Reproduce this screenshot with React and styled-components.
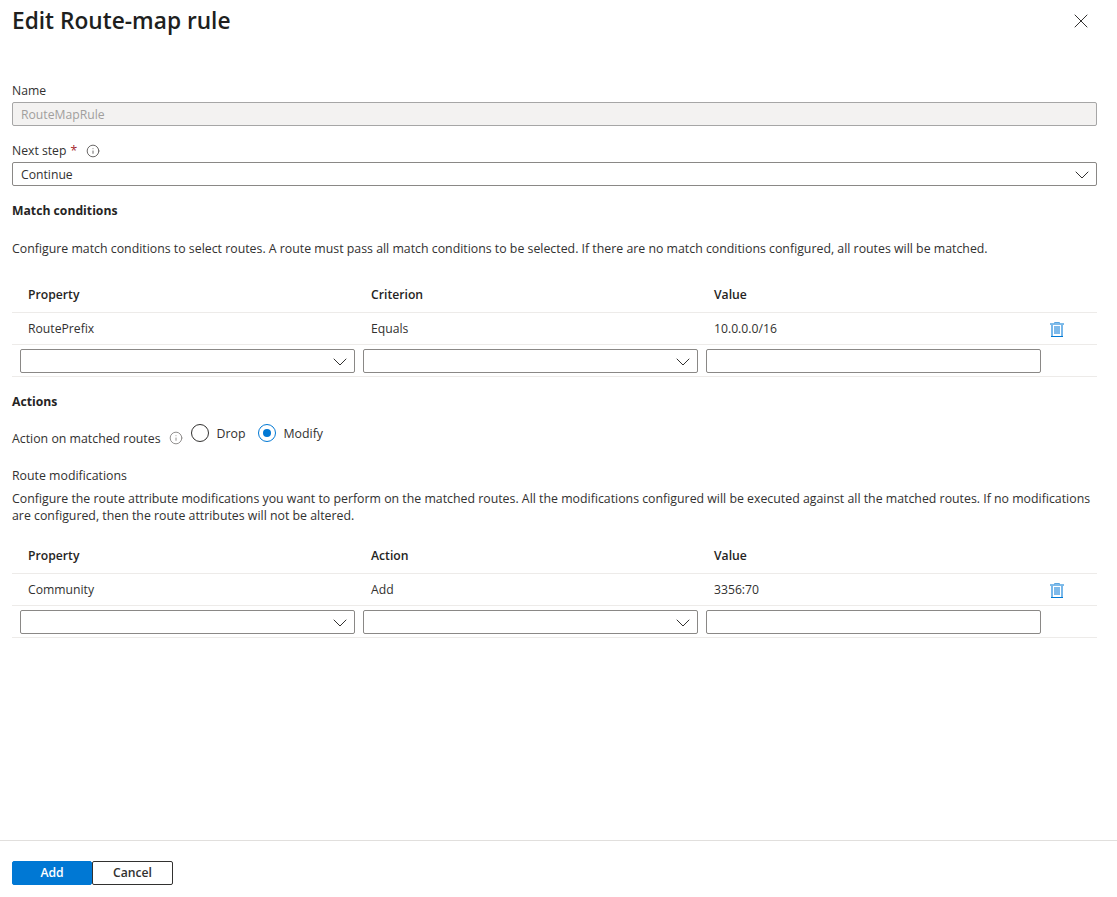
import React from "react";
import styled, { createGlobalStyle } from "styled-components";
import { X, ChevronDown, Info } from "lucide-react";

const FONT = `"Open Sans", "Noto Sans", "Liberation Sans", sans-serif`;

const Global = createGlobalStyle`
  html, body { margin: 0; padding: 0; background: #fff; }
  body { font-family: ${FONT}; font-size: 12.2px; color: #323130; }
  * { box-sizing: border-box; }
`;

const Blade = styled.div`
  height: 897px;
  display: flex;
  flex-direction: column;
  overflow: hidden;
`;
const Header = styled.header`
  height: 42px;
  padding: 0 24px 0 12px;
  display: flex;
  align-items: center;
  justify-content: space-between;
`;
const Title = styled.h1`
  margin: 0;
  font-size: 22.7px;
  line-height: 42px;
  height: 42px;
  font-weight: 600;
  color: #201f1e;
`;
const CloseBtn = styled.span`
  display: flex;
  color: #323130;
`;
const Body = styled.main`
  flex: 1;
  padding: 39px 20px 0 12px;
`;
const FieldLabel = styled.div`
  height: 21px;
  padding-bottom: 2px;
  line-height: 16px;
  display: flex;
  align-items: center;
  gap: 4px;
`;
const Star = styled.span`
  color: #a4262c;
`;
const InfoIcon = styled.span`
  display: inline-flex;
  color: #605e5c;
  margin-left: 5px;
`;
const TextBox = styled.div`
  height: 24px;
  border: 1px solid ${(p) => (p.$disabled ? "#a6a6a6" : "#8a8886")};
  border-radius: 2px;
  background: ${(p) => (p.$disabled ? "#f3f2f1" : "#fff")};
  color: ${(p) => (p.$disabled ? "#a19f9d" : "#323130")};
  padding: 2px 8px 0;
  line-height: 20px;
  display: flex;
  align-items: center;
  justify-content: space-between;
`;
const Chevron = styled(ChevronDown)`
  margin-right: -6px;
  color: #323130;
  flex: none;
`;
const Gap = styled.div`
  height: ${(p) => p.$h}px;
`;
const SectionTitle = styled.h2`
  margin: 0;
  font-size: 12.2px;
  line-height: 16px;
  font-weight: 700;
  color: #252423;
`;
const Para = styled.p`
  margin: 0;
  line-height: 17px;
  font-size: 12.33px;
`;
const GridRow = styled.div`
  display: grid;
  grid-template-columns: 335px 335px 335px 1fr;
  column-gap: 8px;
  padding-left: 8px;
  align-items: center;
  height: 32px;
  border-bottom: 1px solid #edebe9;
`;
const HeadRow = styled(GridRow)`
  height: 37px;
  font-weight: 600;
  color: #252423;
`;
const Cell = styled.div`
  padding-left: 8px;
`;
const TrashBtn = styled.span`
  display: flex;
`;
const ActionRow = styled.div`
  display: flex;
  align-items: center;
  height: 24px;
  font-size: 12.33px;
`;
const ActionLabel = styled.span`
  line-height: 16px;
  padding-top: 11px;
`;
const ActionInfo = styled.span`
  display: inline-flex;
  color: #8a8886;
  margin: 10px 8px 0 8px;
`;
const Radio = styled.span`
  width: 18px;
  height: 18px;
  border-radius: 50%;
  border: 1px solid ${(p) => (p.$on ? "#0078d4" : "#323130")};
  display: flex;
  align-items: center;
  justify-content: center;
  margin-right: 8px;
  &::after {
    content: "";
    display: ${(p) => (p.$on ? "block" : "none")};
    width: 8px;
    height: 8px;
    border-radius: 50%;
    background: #0078d4;
  }
`;
const RadioText = styled.span`
  margin-right: 12px;
`;
const Footer = styled.footer`
  height: 57px;
  border-top: 1px solid #e1dfdd;
  padding: 20px 12px 0;
  display: flex;
  align-items: flex-start;
`;
const Button = styled.button`
  width: ${(p) => p.$w}px;
  height: 24px;
  font-family: ${FONT};
  font-size: 12.2px;
  font-weight: 600;
  padding: 0 0 2px;
  border-radius: 2px;
  border: 1px solid ${(p) => (p.$primary ? "#0078d4" : "#323130")};
  background: ${(p) => (p.$primary ? "#0078d4" : "#fff")};
  color: ${(p) => (p.$primary ? "#fff" : "#323130")};
`;

const Trash = () => (
  <svg width="16" height="16" viewBox="0 0 16 16">
    <path d="M1 3h14" stroke="#0078d4" strokeWidth="1" />
    <path d="M5.5 2.5v-1h5v1" fill="none" stroke="#5ba6e0" strokeWidth="1" />
    <path d="M3 3.5V15M13 3.5V15" stroke="#79b8ea" strokeWidth="2" />
    <path d="M2 15.5h12" stroke="#0078d4" strokeWidth="1" />
    <rect x="5" y="5" width="6" height="8" fill="#7fbaea" />
  </svg>
);

const InputRow = () => (
  <GridRow>
    <TextBox>
      <span />
      <Chevron size={24} strokeWidth={1} />
    </TextBox>
    <TextBox>
      <span />
      <Chevron size={24} strokeWidth={1} />
    </TextBox>
    <TextBox />
    <span />
  </GridRow>
);

const RuleTable = ({ middle, row }) => (
  <div>
    <HeadRow>
      <Cell>Property</Cell>
      <Cell>{middle}</Cell>
      <Cell>Value</Cell>
      <span />
    </HeadRow>
    <GridRow>
      <Cell>{row[0]}</Cell>
      <Cell>{row[1]}</Cell>
      <Cell>{row[2]}</Cell>
      <TrashBtn>
        <Trash />
      </TrashBtn>
    </GridRow>
    <InputRow />
  </div>
);

export default function App() {
  return (
    <Blade>
      <Global />
      <Header>
        <Title>Edit Route-map rule</Title>
        <CloseBtn>
          <X size={24} strokeWidth={1} />
        </CloseBtn>
      </Header>
      <Body>
        <FieldLabel>Name</FieldLabel>
        <TextBox $disabled>RouteMapRule</TextBox>
        <Gap $h={15} />
        <FieldLabel>
          Next step <Star>*</Star>
          <InfoIcon>
            <Info size={14} strokeWidth={1.6} />
          </InfoIcon>
        </FieldLabel>
        <TextBox>
          Continue
          <Chevron size={24} strokeWidth={1} />
        </TextBox>
        <Gap $h={17} />
        <SectionTitle>Match conditions</SectionTitle>
        <Gap $h={21} />
        <Para>
          Configure match conditions to select routes. A route must pass all match conditions to be
          selected. If there are no match conditions configured, all routes will be matched.
        </Para>
        <Gap $h={19} />
        <RuleTable middle="Criterion" row={["RoutePrefix", "Equals", "10.0.0.0/16"]} />
        <Gap $h={17} />
        <SectionTitle>Actions</SectionTitle>
        <Gap $h={11} />
        <ActionRow>
          <ActionLabel>Action on matched routes</ActionLabel>
          <ActionInfo>
            <Info size={14} strokeWidth={1.6} />
          </ActionInfo>
          <Radio />
          <RadioText>Drop</RadioText>
          <Radio $on />
          <RadioText>Modify</RadioText>
        </ActionRow>
        <Gap $h={22} />
        <Para>Route modifications</Para>
        <Gap $h={6} />
        <Para>
          Configure the route attribute modifications you want to perform on the matched routes. All
          the modifications configured will be executed against all the matched routes. If no
          modifications are configured, then the route attributes will not be altered.
        </Para>
        <Gap $h={13} />
        <RuleTable middle="Action" row={["Community", "Add", "3356:70"]} />
      </Body>
      <Footer>
        <Button $primary $w={80}>
          Add
        </Button>
        <Button $w={81}>Cancel</Button>
      </Footer>
    </Blade>
  );
}
